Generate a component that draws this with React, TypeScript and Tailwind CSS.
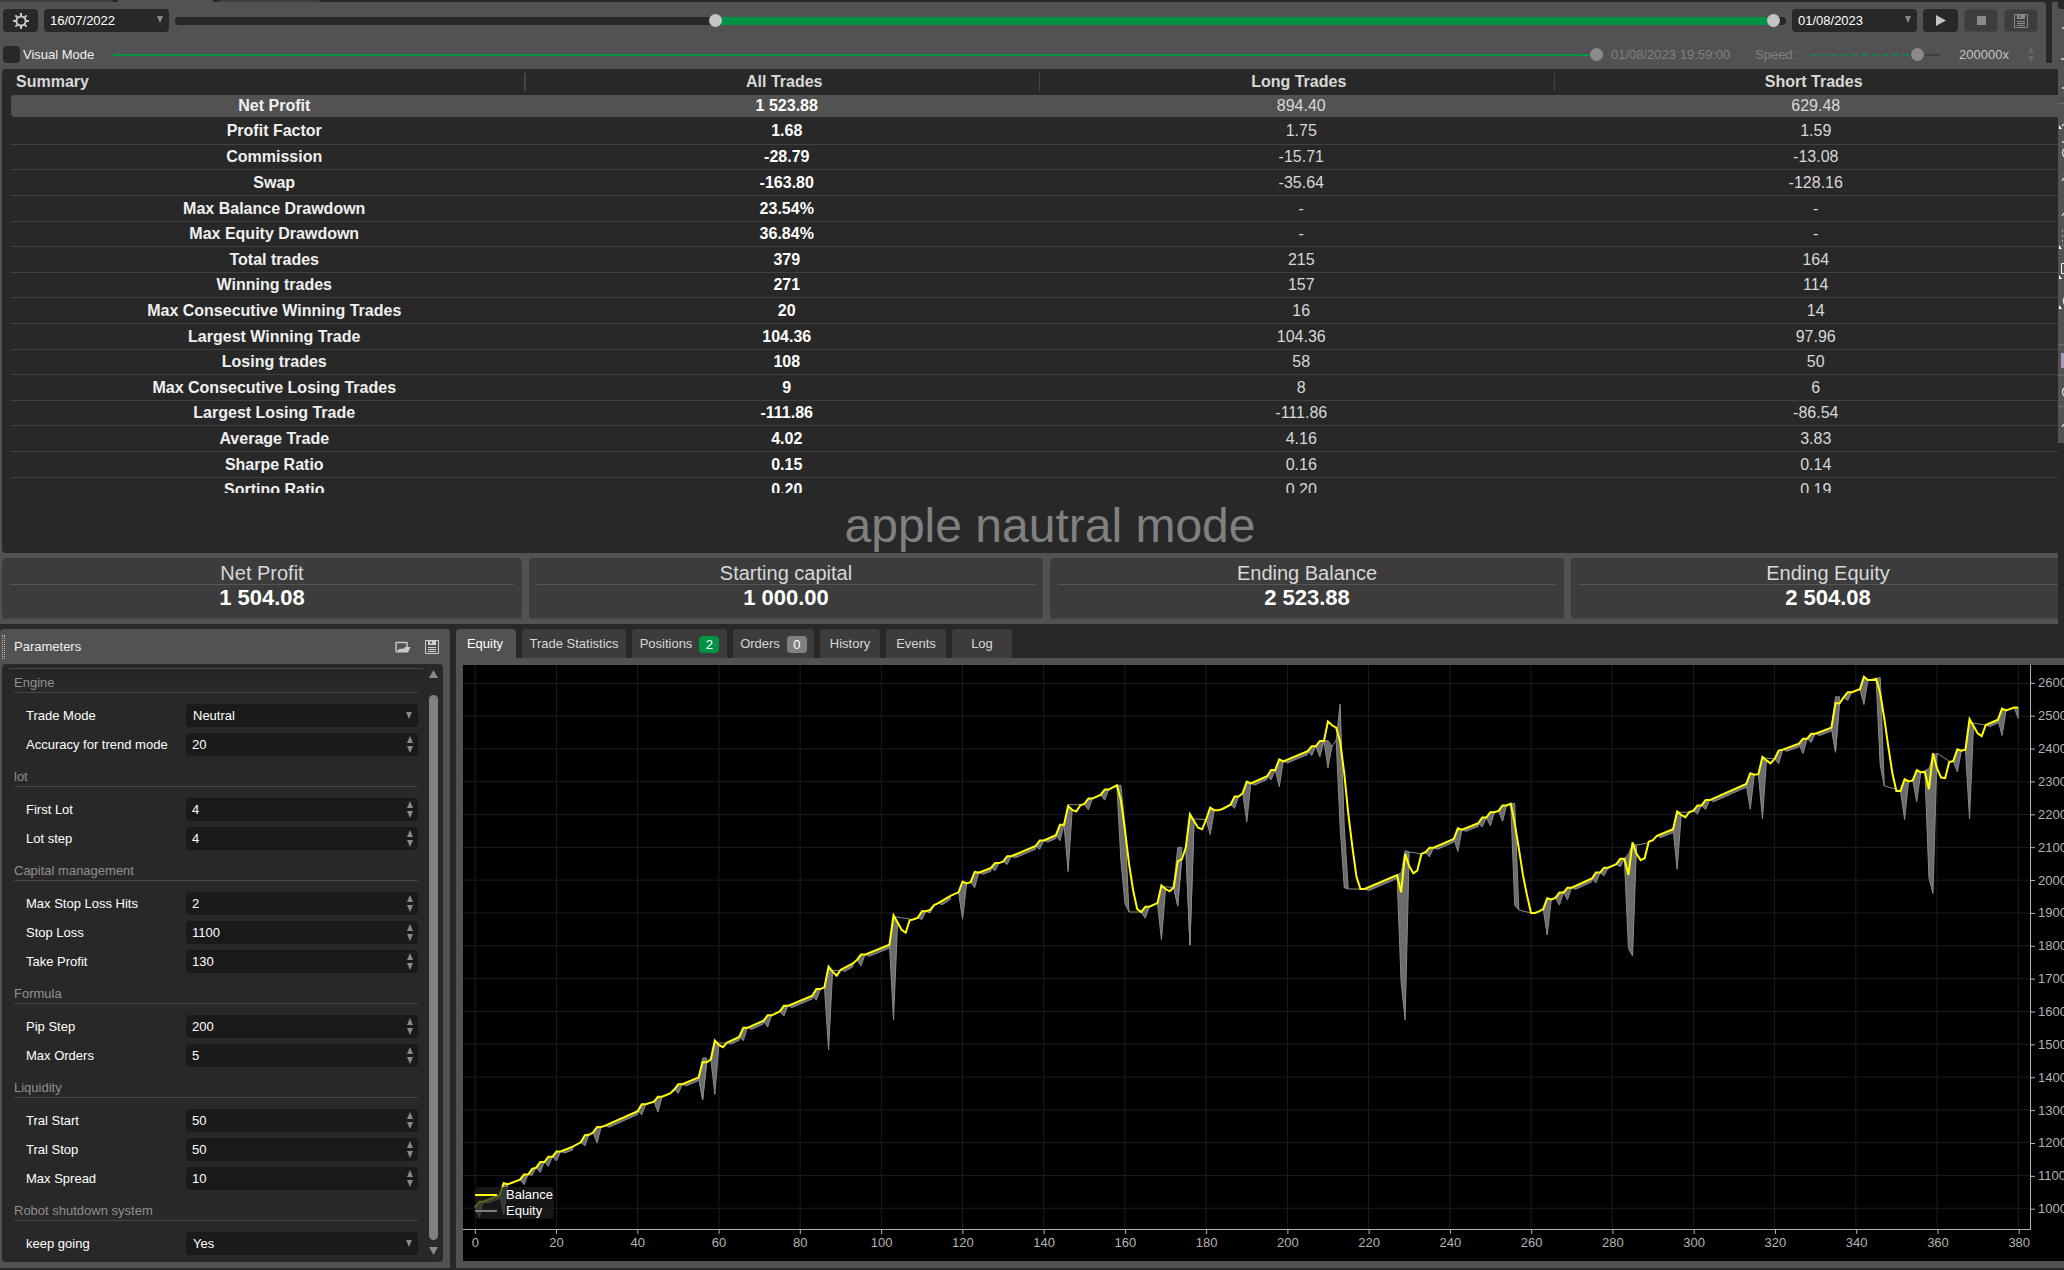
import React from "react";

const summaryRows = [
  ["Profit Factor", "1.68", "1.75", "1.59"],
  ["Commission", "-28.79", "-15.71", "-13.08"],
  ["Swap", "-163.80", "-35.64", "-128.16"],
  ["Max Balance Drawdown", "23.54%", "-", "-"],
  ["Max Equity Drawdown", "36.84%", "-", "-"],
  ["Total trades", "379", "215", "164"],
  ["Winning trades", "271", "157", "114"],
  ["Max Consecutive Winning Trades", "20", "16", "14"],
  ["Largest Winning Trade", "104.36", "104.36", "97.96"],
  ["Losing trades", "108", "58", "50"],
  ["Max Consecutive Losing Trades", "9", "8", "6"],
  ["Largest Losing Trade", "-111.86", "-111.86", "-86.54"],
  ["Average Trade", "4.02", "4.16", "3.83"],
  ["Sharpe Ratio", "0.15", "0.16", "0.14"],
  ["Sortino Ratio", "0.20", "0.20", "0.19"],
];

const totals = [
  { title: "Net Profit", value: "1 504.08" },
  { title: "Starting capital", value: "1 000.00" },
  { title: "Ending Balance", value: "2 523.88" },
  { title: "Ending Equity", value: "2 504.08" },
];

const sections = [
  {
    title: "Engine",
    fields: [
      { label: "Trade Mode", value: "Neutral", select: true },
      { label: "Accuracy for trend mode", value: "20" },
    ],
  },
  {
    title: "lot",
    fields: [
      { label: "First Lot", value: "4" },
      { label: "Lot step", value: "4" },
    ],
  },
  {
    title: "Capital management",
    fields: [
      { label: "Max Stop Loss Hits", value: "2" },
      { label: "Stop Loss", value: "1100" },
      { label: "Take Profit", value: "130" },
    ],
  },
  {
    title: "Formula",
    fields: [
      { label: "Pip Step", value: "200" },
      { label: "Max Orders", value: "5" },
    ],
  },
  {
    title: "Liquidity",
    fields: [
      { label: "Tral Start", value: "50" },
      { label: "Tral Stop", value: "50" },
      { label: "Max Spread", value: "10" },
    ],
  },
  {
    title: "Robot shutdown system",
    fields: [{ label: "keep going", value: "Yes", select: true }],
  },
];

// [trade number, account value]
type Point = [number, number];

const balance: Point[] = [
  [0, 1003], [1, 1020], [2, 1020], [6, 1040], [7, 1076], [8, 1073], [9, 1078], [11, 1087], [12, 1103], [13, 1103],
  [14, 1120], [15, 1124], [16, 1141], [17, 1141], [18, 1157], [19, 1157], [20, 1173], [21, 1173], [24, 1188], [26, 1201],
  [27, 1223], [28, 1224], [29, 1231], [30, 1248], [31, 1248], [32, 1252], [40, 1296], [41, 1317], [42, 1317], [44, 1325],
  [45, 1340], [46, 1340], [48, 1350], [49, 1362], [50, 1378], [51, 1378], [55, 1399], [56, 1445], [57, 1445], [58, 1454],
  [59, 1511], [60, 1498], [61, 1491], [62, 1505], [65, 1522], [66, 1550], [67, 1550], [71, 1572], [72, 1588], [73, 1588],
  [75, 1600], [76, 1617], [77, 1617], [83, 1648], [84, 1668], [85, 1668], [86, 1674], [87, 1737], [88, 1721], [89, 1709],
  [90, 1727], [93, 1746], [94, 1757], [95, 1773], [96, 1773], [102, 1803], [103, 1893], [104, 1871], [105, 1849], [106, 1840],
  [107, 1878], [108, 1881], [109, 1886], [110, 1905], [111, 1905], [112, 1909], [113, 1924], [114, 1930], [117, 1952], [119, 1963],
  [120, 1996], [121, 1990], [122, 1994], [123, 2025], [124, 2023], [127, 2037], [128, 2052], [129, 2052], [130, 2057], [131, 2073],
  [132, 2073], [138, 2104], [139, 2121], [140, 2121], [143, 2137], [144, 2169], [145, 2169], [146, 2226], [147, 2214], [148, 2209],
  [149, 2228], [150, 2232], [151, 2249], [152, 2249], [154, 2260], [155, 2276], [156, 2276], [158, 2289], [159, 2244], [160, 2153],
  [161, 2051], [162, 1970], [163, 1912], [164, 1903], [165, 1919], [166, 1919], [168, 1930], [169, 1984], [170, 1973], [171, 1966],
  [172, 1978], [173, 2058], [174, 2064], [175, 2100], [176, 2201], [177, 2180], [178, 2160], [179, 2155], [180, 2185], [181, 2221],
  [182, 2213], [183, 2213], [184, 2217], [186, 2230], [187, 2255], [188, 2255], [189, 2265], [190, 2300], [191, 2295], [195, 2317],
  [196, 2336], [197, 2336], [198, 2368], [199, 2362], [205, 2393], [206, 2408], [207, 2408], [208, 2424], [209, 2424], [210, 2484],
  [211, 2472], [212, 2465], [213, 2422], [214, 2326], [215, 2204], [216, 2102], [217, 2011], [218, 1973], [219, 1973], [227, 2015],
  [228, 1963], [229, 2080], [230, 2043], [231, 2021], [232, 2029], [233, 2080], [234, 2085], [235, 2099], [236, 2099], [241, 2126],
  [242, 2158], [243, 2154], [247, 2174], [248, 2191], [249, 2191], [250, 2207], [251, 2207], [252, 2211], [253, 2228], [254, 2228],
  [255, 2233], [256, 2173], [257, 2097], [258, 2016], [259, 1955], [260, 1900], [261, 1900], [262, 1905], [263, 1912], [264, 1945],
  [265, 1941], [266, 1946], [267, 1962], [268, 1962], [269, 1977], [270, 1977], [275, 2005], [276, 2023], [277, 2023], [278, 2038],
  [279, 2038], [281, 2049], [282, 2065], [283, 2065], [284, 2016], [285, 2115], [286, 2080], [287, 2061], [288, 2067], [289, 2117],
  [290, 2122], [291, 2135], [295, 2155], [296, 2209], [297, 2199], [298, 2192], [299, 2207], [300, 2212], [301, 2228], [302, 2228],
  [303, 2244], [304, 2244], [313, 2293], [314, 2326], [315, 2321], [316, 2323], [317, 2376], [318, 2365], [319, 2356], [320, 2370],
  [321, 2395], [322, 2398], [326, 2416], [327, 2431], [328, 2431], [329, 2446], [330, 2446], [334, 2465], [335, 2539], [336, 2539],
  [337, 2557], [338, 2573], [339, 2573], [341, 2582], [342, 2620], [343, 2610], [344, 2610], [345, 2614], [346, 2570], [347, 2493],
  [348, 2407], [349, 2326], [350, 2272], [351, 2272], [352, 2308], [353, 2301], [354, 2304], [355, 2335], [356, 2329], [357, 2330],
  [358, 2277], [359, 2387], [360, 2341], [361, 2313], [362, 2311], [363, 2360], [364, 2363], [365, 2399], [366, 2395], [367, 2398],
  [368, 2491], [369, 2470], [370, 2448], [371, 2439], [372, 2473], [375, 2489], [376, 2523], [377, 2517], [379, 2526], [380, 2526],
];

// equity lows below the balance line
const dips: Point[] = [
  [1, 972], [7, 980], [12, 1072], [14, 1100], [16, 1109], [18, 1128], [20, 1144], [27, 1190], [30, 1199], [41, 1285],
  [45, 1293], [50, 1350], [56, 1330], [59, 1347], [66, 1511], [72, 1552], [76, 1586], [84, 1634], [87, 1483], [95, 1739],
  [103, 1574], [110, 1880], [112, 1900], [120, 1881], [123, 1977], [128, 2029], [131, 2048], [139, 2094], [144, 2120], [146, 2026],
  [151, 2214], [155, 2244], [165, 1884], [169, 1818], [173, 1922], [176, 1802], [181, 2139], [187, 2219], [190, 2177], [196, 2306],
  [198, 2285], [206, 2380], [208, 2376], [235, 2071], [242, 2087], [248, 2162], [250, 2166], [253, 2179], [264, 1833], [267, 1924],
  [269, 1940], [276, 1992], [278, 2013], [282, 2041], [296, 2033], [301, 2202], [303, 2215], [314, 2216], [317, 2187], [321, 2355],
  [327, 2386], [329, 2420], [335, 2390], [338, 2548], [342, 2535], [352, 2185], [355, 2239], [365, 2330], [368, 2187], [376, 2441],
  [380, 2493],
];

const drawdowns: Point[][] = [
  [[55, 1399], [56, 1458], [57, 1458], [56.9, 1440], [56, 1330]],
  [[158, 2289], [159, 2289], [160, 2163], [161, 1903], [160, 1929], [159, 2061]],
  [[172, 1980], [173, 2100], [174, 2100], [173.8, 2060], [173, 1922]],
  [[175, 2100], [176, 2190], [177, 2180], [176, 1802]],
  [[209, 2424], [210, 2426], [211, 2408], [210, 2342]],
  [[212, 2427], [213, 2537], [214, 2163], [215, 1973], [214, 1977], [213, 2163]],
  [[227, 2017], [228, 2021], [229, 2090], [230, 2086], [229, 1574], [228, 1691]],
  [[255, 2233], [256, 2234], [257, 1909], [256, 1924]],
  [[283, 2065], [284, 2080], [285, 2110], [286, 2107], [285, 1769], [284, 1792]],
  [[334, 2465], [335, 2559], [336, 2559], [335, 2390]],
  [[345, 2614], [346, 2618], [347, 2287], [346, 2351]],
  [[357, 2334], [358, 2340], [359, 2380], [360, 2387], [359, 1960], [358, 2006]],
];

const links: Point[][] = [
  [[59, 1505], [62, 1503]],
  [[87, 1726], [90, 1724]],
  [[103, 1889], [107, 1882]],
  [[146, 2230], [149, 2230]],
  [[161, 1903], [164, 1903]],
  [[169, 1980], [172, 1978]],
  [[176, 2187], [180, 2185]],
  [[211, 2408], [212, 2427]],
  [[215, 1973], [218, 1973]],
  [[230, 2086], [233, 2080]],
  [[257, 1909], [260, 1900]],
  [[286, 2107], [289, 2114]],
  [[296, 2207], [299, 2207]],
  [[317, 2373], [320, 2370]],
  [[347, 2287], [350, 2277]],
  [[360, 2387], [363, 2363]],
  [[368, 2480], [372, 2473]],
];

const PLOT_W = 1568;
const PLOT_H = 564;
const px = (trade: number) => 12.3 + trade * 4.063;
const py = (value: number) => 18.3 + (2600 - value) * 0.3281;
const toPoints = (points: Point[]) =>
  points.map(([t, v]) => `${px(t).toFixed(1)},${py(v).toFixed(1)}`).join(" ");

const balanceAt = (trade: number) => {
  for (let i = 1; i < balance.length; i++) {
    const [t0, v0] = balance[i - 1];
    const [t1, v1] = balance[i];
    if (trade <= t1) return v0 + ((v1 - v0) * (trade - t0)) / (t1 - t0);
  }
  return balance[balance.length - 1][1];
};

const dipShapes: Point[][] = dips.map(([t, low]) => {
  const end = Math.min(t + 1, 380);
  return [
    [t - 1, balanceAt(t - 1)],
    [t, balanceAt(t)],
    [end, balanceAt(end)],
    [t, low],
  ];
});

// thin band under the long steady climbs
const bands: Point[][] = balance.slice(1).flatMap(([t1, v1], i) => {
  const [t0, v0] = balance[i];
  if (t1 - t0 < 3) return [];
  const band: Point[] = [[t0, v0], [t1, v1], [t1, v1 - 10], [t0 + 1, v0 - 5]];
  return [band];
});

const xTicks = Array.from({ length: 20 }, (_, i) => i * 20);
const yTicks = Array.from({ length: 17 }, (_, i) => 2600 - i * 100);

const GearIcon = () => (
  <svg width="18" height="18" viewBox="0 0 18 18" fill="none" stroke="#c8c8c8">
    <circle cx="9" cy="9" r="4.6" strokeWidth="2" />
    <path
      d="M9 1v3M9 14v3M1 9h3M14 9h3M3.4 3.4l2 2M12.6 12.6l2 2M3.4 14.6l2-2M12.6 5.4l2-2"
      strokeWidth="2"
    />
  </svg>
);

const SaveIcon = ({ color }: { color: string }) => (
  <svg width="14" height="14" viewBox="0 0 14 14" fill="none" stroke={color}>
    <path d="M.5.5h13v13H.5z" />
    <path d="M3 1h8v4H3z" fill={color} stroke="none" />
    <path d="M5 1.5h2v2H5z" fill="#525252" stroke="none" />
    <path d="M3 7.5h8M3 9.5h8M3 11.5h8" />
  </svg>
);

const FolderIcon = () => (
  <svg width="16" height="12" viewBox="0 0 16 12">
    <path d="M1 11V1.500h11V6" fill="none" stroke="#c8c8c8" strokeWidth="1.4" />
    <path d="M1 11.500 4 8l5-.5L10 6h5.500L13 11.500z" fill="#c8c8c8" />
  </svg>
);

const Caret = ({ up = false }: { up?: boolean }) => (
  <svg width="6" height="7" viewBox="0 0 6 7" className="block">
    <path d={up ? "M0 7 3 0l3 7z" : "M0 0h6L3 7z"} fill="currentColor" />
  </svg>
);

const DateSelect = ({ id, label, value }: { id: string; label: string; value: string }) => (
  <div className="relative h-[23px] w-[125px] shrink-0 text-[#8a8a8a]">
    <select
      id={id}
      aria-label={label}
      className="h-full w-full appearance-none rounded bg-[#282828] pl-1.5 text-[13px] text-white"
    >
      <option>{value}</option>
    </select>
    <span className="pointer-events-none absolute top-[7px] right-1.5">
      <Caret />
    </span>
  </div>
);

const thumb =
  "absolute inset-0 h-full w-full appearance-none bg-transparent pointer-events-none [&::-webkit-slider-thumb]:h-[13px] [&::-webkit-slider-thumb]:w-[13px] [&::-webkit-slider-thumb]:appearance-none [&::-webkit-slider-thumb]:rounded-full [&::-webkit-slider-thumb]:pointer-events-auto";

const Toolbar: React.FC = () => (
  <div className="bg-[#282828]">
    {/* document tabs cut off at the top */}
    <div className="flex h-0.5 gap-1.5">
      <div className="w-28 bg-[#3c3c3c]"></div>
      <div className="w-[95px] bg-[#525252]"></div>
      <div className="w-[100px] bg-[#3c3c3c]"></div>
    </div>
    <div className="flex gap-1.5">
      <div className="min-w-0 flex-1 rounded-tr bg-[#525252] pt-[7px] pr-2 pl-[3px]">
        <div className="flex items-center gap-1.5">
          <button
            aria-label="Settings"
            className="flex h-[23px] w-[35px] shrink-0 items-center justify-center rounded bg-[#282828]"
          >
            <GearIcon />
          </button>
          <DateSelect id="from" label="Start date" value="16/07/2022" />
          <div className="relative h-2 flex-1 rounded-full bg-[#282828]">
            <div className="mr-[1%] ml-[33.5%] h-full bg-[#009346]"></div>
            <input type="range" aria-label="Range start" min="0" max="1000" defaultValue="334" className={`${thumb} [&::-webkit-slider-thumb]:bg-[#c4c4c4]`} />
            <input type="range" aria-label="Range end" min="0" max="1000" defaultValue="996" className={`${thumb} [&::-webkit-slider-thumb]:bg-[#c4c4c4]`} />
          </div>
          <DateSelect id="to" label="End date" value="01/08/2023" />
          <button aria-label="Play" className="flex h-[23px] w-[35px] shrink-0 items-center justify-center rounded bg-[#282828]">
            <svg width="10" height="11" viewBox="0 0 10 11">
              <path d="M0 0l10 5.500L0 11z" fill="#c4c4c4" />
            </svg>
          </button>
          <button aria-label="Stop" className="flex h-[23px] w-[34px] shrink-0 items-center justify-center rounded border border-[#464646] bg-[#3e3e3e]">
            <span className="h-[9px] w-[9px] bg-[#8a8a8a]"></span>
          </button>
          <button aria-label="Save" className="flex h-[23px] w-[34px] shrink-0 items-center justify-center rounded border border-[#464646] bg-[#3e3e3e]">
            <SaveIcon color="#8a8a8a" />
          </button>
        </div>
        <div className="mt-3.5 flex h-[17px] items-center">
          <input
            id="visual"
            type="checkbox"
            className="h-[17px] w-[17px] appearance-none rounded bg-[#282828] checked:bg-[#009346]"
          />
          <label htmlFor="visual" className="ml-[3px] w-[90px] text-[#f0f0f0]">Visual Mode</label>
          <div className="relative h-[13px] flex-1">
            <div className="mt-[6px] mr-1 h-0.5 bg-[#009346]"></div>
            <input type="range" aria-label="Position" min="0" max="100" defaultValue="100" className={`${thumb} [&::-webkit-slider-thumb]:bg-[#8a8a8a]`} />
          </div>
          <span className="ml-2 w-36 text-[#808080]">01/08/2023 19:59:00</span>
          <label htmlFor="speed" className="w-14 text-[#808080]">Speed:</label>
          <div className="relative h-[13px] w-32">
            <div className="mt-[6px] flex">
              <div className="w-[84%] border-t-2 border-dashed border-[#1f7f4c]"></div>
              <div className="flex-1 border-t-2 border-dashed border-[#3c3c3c]"></div>
            </div>
            <input id="speed" type="range" min="0" max="100" defaultValue="87" className={`${thumb} [&::-webkit-slider-thumb]:bg-[#8a8a8a]`} />
          </div>
          <span className="ml-5 w-[69px] text-[#c4c4c4]">200000x</span>
          <span className="mr-1 flex flex-col gap-[3px] text-[#666666]">
            <Caret up />
            <Caret />
          </span>
        </div>
      </div>
      <div className="w-1.5 bg-[#525252]"></div>
    </div>
  </div>
);

const Summary: React.FC = () => (
  <div className="ml-0.5 overflow-hidden rounded-l bg-[#282828]">
    <div className="ml-[9px] h-[424px] overflow-hidden">
      <table className="w-[calc(100%+11px)] table-fixed border-separate border-spacing-0 text-center text-base leading-[22px]">
        <thead>
          <tr className="h-[26px] text-[#d8d8d8]">
            <th className="py-0 pl-[5px] text-left font-bold">
              <span className="flex h-[18px] items-center justify-between border-r-2 border-[#464646]">Summary</span>
            </th>
            <th className="p-0 font-bold">
              <span className="flex h-[18px] items-center justify-center border-r border-[#464646] pl-1">All Trades</span>
            </th>
            <th className="p-0 font-bold">
              <span className="flex h-[18px] items-center justify-center border-r border-[#464646] pl-1">Long Trades</span>
            </th>
            <th className="py-0 pr-0 pl-1 font-bold">Short Trades</th>
          </tr>
        </thead>
        <tbody>
          <tr className="h-[22px] bg-[#525252]">
            <th className="rounded-l py-0 pl-3 font-bold text-[#f0f0f0]">Net Profit</th>
            <td className="py-0 pl-2 font-bold text-white">1 523.88</td>
            <td className="py-0 pl-2 text-[#d8d8d8]">894.40</td>
            <td className="py-0 pl-2 text-[#d8d8d8]">629.48</td>
          </tr>
          {summaryRows.map(([name, all, long, short], i) => (
            <tr
              key={name}
              className={`${i === 0 ? "h-7" : i % 5 === 1 || i % 5 === 4 ? "h-[25px]" : "h-[26px]"} *:border-b *:border-[#414141] *:py-0`}
            >
              <th className="pl-3 font-bold text-[#f0f0f0]">{name}</th>
              <td className="pl-2 font-bold text-white">{all}</td>
              <td className="pl-2 text-[#d8d8d8]">{long}</td>
              <td className="pl-2 text-[#d8d8d8]">{short}</td>
            </tr>
          ))}
        </tbody>
      </table>
    </div>
    <h1 className="h-[60px] pl-10 text-center text-5xl leading-[66px] text-[#808080]">
      apple nautral mode
    </h1>
  </div>
);

const Totals: React.FC = () => (
  <div className="overflow-hidden py-[5px] pl-0.5">
    <div className="grid w-[calc(100%+27px)] grid-cols-[520fr_514fr_514fr_514fr] gap-[7px]">
      {totals.map((item) => (
        <div
          key={item.title}
          className="h-[61px] rounded border-b border-[#464646] bg-[#3c3c3c] px-2 text-center"
        >
          <p className="border-b border-[#555555] pt-1 text-xl leading-[22px] text-[#d8d8d8]">
            {item.title}
          </p>
          <p className="text-[22px] leading-[26px] font-bold text-white">{item.value}</p>
        </div>
      ))}
    </div>
  </div>
);

// Drawing tools rail, only its left edge is visible
const Rail: React.FC = () => (
  <svg width="6" height="443" viewBox="0 0 6 443" className="shrink-0 bg-[#525252]">
    <path d="M0 0h6v9H3Q0 9 0 6z" fill="#282828" />
    <path d="M0 103.500h6M0 344.500h6M0 375.500h6M0 406.500h6" stroke="#6c6c6c" />
    <path
      d="M4 28h2M3 59h3M4 88h2M4 126l2-2M4 142h2M6 149q-3 3 0 8M4 181l2-3M4 216l2-3M4 427l2-3M6 298q-1 3 0 6M6 388q-3 4 0 8"
      stroke="#d8d8d8"
      strokeWidth="1.3"
      fill="none"
    />
    <path d="M4.500 230v16" stroke="#a0a0a0" strokeDasharray="2 3" />
    <path d="M6 263.500H3.500v10H6" stroke="#f0f0f0" fill="none" />
    <path d="M1 125v4h3zM1 245v4h3zM1 275v4h3zM1 305v4h3z" fill="#ffffff" />
    <path d="M3 353h3v15H3z" fill="#a0a0a0" />
    <path d="M4 355h2v11H4z" fill="#b48ccc" />
  </svg>
);

const Parameters: React.FC = () => (
  <aside className="flex w-[450px] shrink-0 flex-col rounded-t bg-[#525252] pr-[7px] pb-1.5 pl-0.5">
    <header className="flex h-[35px] items-center">
      <div className="h-6 w-[3px] border-x border-dotted border-[#b4b4b4]"></div>
      <h2 className="ml-[9px] flex-1 text-[#f0f0f0]">Parameters</h2>
      <button aria-label="Open preset" className="mr-3.5">
        <FolderIcon />
      </button>
      <button aria-label="Save preset" className="mr-1">
        <SaveIcon color="#d0d0d0" />
      </button>
    </header>
    <div className="flex flex-1 rounded bg-[#282828] pt-1 pr-1 pb-[7px] pl-1.5">
      <form className="flex-1">
        <div className="border-t border-[#464646] shadow-[0_3px_4px_#1c1c1c]"></div>
        <div className="flex flex-col gap-[7px] pr-1.5 pl-1.5">
          {sections.map((section) => (
            <fieldset key={section.title}>
              <legend className="h-6 w-full border-b border-[#464646] leading-[27px] text-[#909090]">
                {section.title}
              </legend>
              <div className="flex flex-col gap-1.5 pt-[11px] pl-3">
                {section.fields.map((field) => (
                  <div key={field.label} className="flex h-[23px] items-center text-white">
                    <label htmlFor={field.label} className="w-40">{field.label}</label>
                    <div className="relative h-full flex-1 text-[#8a8a8a]">
                      {field.select ? (
                        <>
                          <select
                            id={field.label}
                            className="block h-full w-full appearance-none rounded bg-[#1a1a1a] pl-[7px] text-[13px] text-white"
                          >
                            <option>{field.value}</option>
                          </select>
                          <span className="pointer-events-none absolute top-2 right-1.5">
                            <Caret />
                          </span>
                        </>
                      ) : (
                        <>
                          <input
                            id={field.label}
                            inputMode="numeric"
                            defaultValue={field.value}
                            className="block h-full w-full rounded bg-[#1a1a1a] px-1.5 text-[13px] text-white"
                          />
                          <span className="absolute top-[3px] right-[5px] flex flex-col gap-[3px]">
                            <button type="button" aria-label="Increase">
                              <Caret up />
                            </button>
                            <button type="button" aria-label="Decrease">
                              <Caret />
                            </button>
                          </span>
                        </>
                      )}
                    </div>
                  </div>
                ))}
              </div>
            </fieldset>
          ))}
        </div>
      </form>
      {/* Scrollbar */}
      <div className="ml-1 flex w-[11px] flex-col items-center gap-[7px] text-[#8a8a8a]">
        <svg width="9" height="8" viewBox="0 0 9 8" className="mt-0.5 mb-2.5">
          <path d="M0 8 4.500 0 9 8z" fill="currentColor" />
        </svg>
        <div className="w-[9px] flex-1 rounded-full bg-[#808080]"></div>
        <svg width="9" height="8" viewBox="0 0 9 8">
          <path d="M0 0h9L4.500 8z" fill="currentColor" />
        </svg>
      </div>
    </div>
  </aside>
);

const tab = "flex h-[29px] items-center justify-center rounded-t pt-px text-[#d8d8d8] bg-[#3c3c3c]";

const Chart: React.FC = () => (
  <div className="grid min-h-0 flex-1 grid-cols-[1fr_33px] grid-rows-[1fr_31px] bg-black">
    <div className="relative border-r border-b border-[#b4b4b4]">
      <svg
        viewBox={`0 0 ${PLOT_W} ${PLOT_H}`}
        preserveAspectRatio="none"
        className="absolute inset-0 h-full w-full"
      >
        <g stroke="#1c1c20" shapeRendering="crispEdges">
          {xTicks.map((t) => (
            <line key={t} x1={px(t)} x2={px(t)} y1="0" y2={PLOT_H} />
          ))}
          {yTicks.map((v) => (
            <line key={v} x1="0" x2={PLOT_W} y1={py(v)} y2={py(v)} />
          ))}
        </g>
        <g fill="#6c6c6c" stroke="#8a8a8a" strokeWidth="1">
          {[...bands, ...dipShapes, ...drawdowns].map((shape, i) => (
            <polygon key={i} points={toPoints(shape)} />
          ))}
          {links.map((link, i) => (
            <polyline key={i} points={toPoints(link)} />
          ))}
        </g>
        <polyline points={toPoints(balance)} fill="none" stroke="#ffff00" strokeWidth="2" />
      </svg>
      {/* Legend */}
      <ul className="absolute bottom-2.5 left-3 w-[79px] rounded bg-[#202020]/70 text-white">
        <li className="flex h-4 items-center gap-[9px]">
          <span className="h-0.5 w-[22px] bg-[#ffff00]"></span>Balance
        </li>
        <li className="flex h-4 items-center gap-[9px]">
          <span className="h-0.5 w-[22px] bg-[#808080]"></span>Equity
        </li>
      </ul>
    </div>
    <svg className="h-full w-full overflow-hidden" fill="#b4b4b4" fontSize="13">
      {yTicks.map((v) => {
        const top = `${(py(v) / PLOT_H) * 100}%`;
        return (
          <g key={v}>
            <line x1="0" x2="4" y1={top} y2={top} stroke="#b4b4b4" />
            <text x="7" y={top} dy="4">{v}</text>
          </g>
        );
      })}
    </svg>
    <svg className="h-full w-full overflow-visible" fill="#b4b4b4" fontSize="13">
      {xTicks.map((t) => {
        const left = `${(px(t) / PLOT_W) * 100}%`;
        return (
          <g key={t}>
            <line x1={left} x2={left} y1="0" y2="4" stroke="#b4b4b4" />
            <text x={left} y="17" textAnchor="middle">{t}</text>
          </g>
        );
      })}
    </svg>
  </div>
);

const Results: React.FC = () => (
  <section className="flex min-w-0 flex-1 flex-col">
    <nav className="flex gap-1.5">
      <button className="flex h-[29px] w-[60px] items-center justify-center rounded-t bg-[#525252] pt-px pr-0.5 text-white">
        Equity
      </button>
      <button className={`${tab} w-[104px]`}>Trade Statistics</button>
      <button className={`${tab} w-[95px] gap-[7px]`}>
        Positions
        <span className="h-[17px] w-5 rounded bg-[#009346] leading-[17px] text-white">2</span>
      </button>
      <button className={`${tab} w-[81px] gap-[7px]`}>
        Orders
        <span className="h-[17px] w-5 rounded bg-[#808080] leading-[17px] text-white">0</span>
      </button>
      <button className={`${tab} w-[60px]`}>History</button>
      <button className={`${tab} w-[60px]`}>Events</button>
      <button className={`${tab} w-[60px]`}>Log</button>
    </nav>
    <div className="flex flex-1 flex-col bg-[#525252] pt-[7px] pb-[7px] pl-[7px]">
      <Chart />
    </div>
  </section>
);

const App: React.FC = () => {
  return (
    <main className="flex min-h-screen flex-col gap-[5px] overflow-hidden bg-[#282828] pb-0.5 font-['Liberation_Sans',Arial,sans-serif] text-[13px] leading-4">
      <div className="flex items-start">
        <div className="min-w-0 flex-1 bg-[#525252]">
          <Toolbar />
          <div className="pt-1.5">
            <Summary />
          </div>
          <Totals />
        </div>
        <Rail />
      </div>
      <div className="flex flex-1 gap-1.5">
        <Parameters />
        <Results />
      </div>
    </main>
  );
};

export default App;
